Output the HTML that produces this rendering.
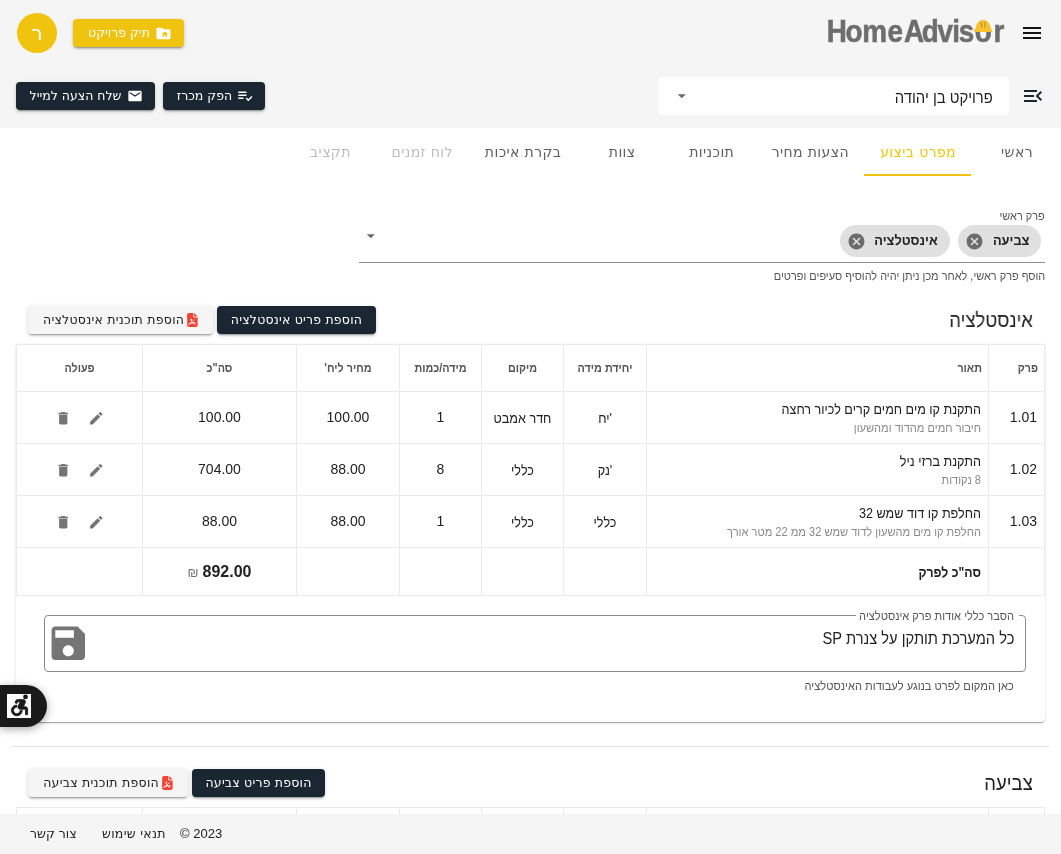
<!DOCTYPE html>
<html lang="he" dir="rtl">
<head>
<meta charset="utf-8">
<title>HomeAdvisor</title>
<style>
*{box-sizing:border-box}
html,body{margin:0;padding:0;overflow:hidden}
body{width:1061px;height:854px;overflow:hidden;background:#fff;position:relative;
 font-family:"Liberation Sans","DejaVu Sans",sans-serif;color:#212121;direction:rtl}
.dv{font-family:"DejaVu Sans","Liberation Sans",sans-serif}
.abs{position:absolute}
svg{display:block}
/* header */
#topbar{position:absolute;left:0;top:0;width:1061px;height:128px;background:#f5f5f5}
.btn{position:absolute;display:flex;align-items:center;justify-content:center;border-radius:4px;
 font-family:"DejaVu Sans","Liberation Sans",sans-serif;font-size:12.5px;letter-spacing:0;white-space:nowrap;
 box-shadow:0 3px 1px -2px rgba(0,0,0,.2),0 2px 2px 0 rgba(0,0,0,.14),0 1px 5px 0 rgba(0,0,0,.12)}
.btn span{position:relative;top:-1px}
.btn.dark{background:#1a2732;color:#fff}
.btn.yel{background:#f0c30f;color:#fff}
.btn.light{background:#f5f5f5;color:#212121}
/* tabs */
#tabs{position:absolute;right:0;top:128px;height:48px;display:flex;flex-direction:row}
.tab{min-width:90px;padding:0 15px 0 17px;height:48px;line-height:48px;text-align:center;font-family:"DejaVu Sans",sans-serif;
 font-size:14px;letter-spacing:.4px;color:#5f5f5f;white-space:nowrap;position:relative}
.tab.sel{color:#f0c30f}
.tab.sel:after{content:"";position:absolute;left:0;right:0;bottom:0;height:2px;background:#f0c30f}
.tab.dis{color:#bdbdbd}
/* table */
table.t{position:absolute;border-collapse:collapse;table-layout:fixed;left:16px;width:1029px}
table.t td,table.t th{border:1px solid #eaeaea;padding:0 8px;text-align:center;font-size:14px;font-weight:normal;color:#212121;vertical-align:middle}
table.t th{font-size:12px;font-weight:bold;color:#555;height:47px}
table.t td.r,table.t th.r{text-align:right}
.sub{font-size:12px;color:#8a8a8a;margin-top:4px}
.hx.sub{transform:scaleX(.923)}
table.t td.n{padding-bottom:2px}
table.t th.r{padding-right:6px}
table.t td.r{padding-right:7px}
table.t td.c1{padding-right:7px;padding-bottom:2px;text-align:right}
.nh{letter-spacing:-.65px}

.hx{display:block;transform:scaleX(.9);transform-origin:right center;white-space:nowrap}
.hc{display:block;transform:scaleX(.9);transform-origin:center center;white-space:nowrap}
.chip{position:absolute;height:32px;border-radius:16px;background:#e0e0e0;top:225px}
.chip b{position:absolute;right:12px;top:0;line-height:32px;font-size:13.5px;color:#212121;white-space:nowrap;transform:scaleX(.95);transform-origin:right center}
.chip svg{position:absolute;left:7px;top:6.500px}
.h6{position:absolute;right:28px;font-size:20.5px;line-height:28px;color:#212121;white-space:nowrap;transform:scaleX(.9);transform-origin:right center}
.cap{position:absolute;font-size:12px;line-height:16px;color:#555;white-space:nowrap;transform:scaleX(.91);transform-origin:right center}
.ic{display:inline-block;vertical-align:middle}
</style>
</head>
<body>
<div id="wrap" style="position:absolute;left:0;top:0;width:1061px;height:854px;overflow:hidden;will-change:transform">
<div id="topbar">
 <!-- hamburger -->
 <svg class="abs" style="left:1020px;top:21px" width="24" height="24" viewBox="0 0 24 24"><path fill="#111" d="M3 18h18v-2H3v2zm0-5h18v-2H3v2zm0-7v2h18V6H3z"/></svg>
 <!-- logo -->
 <svg class="abs" style="left:824px;top:10px" width="190" height="40" viewBox="0 0 190 40" direction="ltr">
  <text transform="scale(0.87,1)" x="3.2 24.8 44.0 73.0 91.9 112.3 130.4 147.3 155.0 173.3 194.9" y="32.4" font-family="Liberation Sans, sans-serif" font-weight="bold" font-size="32" fill="#6e6e6e" stroke="#6e6e6e" stroke-width=".6" style="direction:ltr;unicode-bidi:bidi-override">HomeAdvisor</text>
  <path d="M151.400 20.500C151.400 14.500 154.500 11 157.200 10.600L157.600 9.900h3.200l.4.700c2.700.4 5.800 3.900 5.800 9.900z" fill="#f8c22d"/>
  <rect x="150" y="19.300" width="18.300" height="2.800" rx="1.400" fill="#f8c22d"/>
  <path d="M156.900 11.500l.9 6M161.500 11.500l-.9 6" stroke="#8a7440" stroke-width=".7" fill="none"/>
 </svg>
 <!-- avatar -->
 <div class="abs dv" style="left:17px;top:13px;width:40px;height:40px;border-radius:50%;background:#f0c30f;color:#fff;font-size:20px;line-height:40px;text-align:center">ר</div>
 <div class="btn yel" style="left:73px;top:19px;width:111px;height:28px"><svg width="17" height="17" viewBox="0 0 24 24" style="margin-left:5px;margin-right:-3px"><path fill="#fff" d="M20 6h-8l-2-2H4c-1.100 0-2 .9-2 2v12c0 1.100.9 2 2 2h16c1.100 0 2-.9 2-2V8c0-1.100-.9-2-2-2zm-3 11h-2v-3h-2v3h-2v-4.500H9.500L14 9l4.500 3.500H17V17z"/></svg><span>תיק פרויקט</span></div>
 <!-- second row -->
 <svg class="abs" style="left:1021px;top:84px" width="24" height="24" viewBox="0 0 24 24"><path fill="#1a2732" d="M3 18h13v-2H3v2zm0-5h10v-2H3v2zm0-7v2h13V6H3zm18 9.590L17.420 12 21 8.410 19.590 7l-5 5 5 5L21 15.590z"/></svg>
 <div class="abs" style="left:658px;top:76.500px;width:351px;height:38.500px;background:#fff;border-radius:4px"></div>
 <div class="abs" id="proj" style="right:68px;top:78.500px;height:38px;line-height:38px;font-size:16px;color:#212121;white-space:nowrap;transform:scaleX(.926);transform-origin:right center">פרויקט בן יהודה</div>
 <svg class="abs" style="left:672.250px;top:85.800px" width="19.500" height="19.500" viewBox="0 0 24 24"><path fill="#6a6a6a" d="M7 10l5 5 5-5z"/></svg>
 <div class="btn dark" style="left:163px;top:82px;width:102px;height:28px"><svg width="18" height="18" viewBox="0 0 24 24" style="margin-left:4px;margin-right:-3px"><path fill="#fff" d="M3 10h11v2H3zm0-4h11v2H3zm0 8h7v2H3zm17.590-2.070l-4.250 4.240-2.120-2.120-1.410 1.410L16.340 19 22 13.340z"/></svg><span>הפק מכרז</span></div>
 <div class="btn dark" style="left:16px;top:82px;width:139px;height:28px"><svg width="16" height="16" viewBox="0 0 24 24" style="margin-left:6px;margin-right:-2px"><path fill="#fff" d="M20 4H4c-1.100 0-1.990.9-1.990 2L2 18c0 1.100.9 2 2 2h16c1.100 0 2-.9 2-2V6c0-1.100-.9-2-2-2zm0 4l-8 5-8-5V6l8 5 8-5v2z"/></svg><span>שלח הצעה למייל</span></div>
</div>
<div id="tabs">
 <div class="tab">ראשי</div>
 <div class="tab sel" style="width:107px">מפרט ביצוע</div>
 <div class="tab" style="width:108.500px">הצעות מחיר</div>
 <div class="tab" style="min-width:89.500px">תוכניות</div>
 <div class="tab" style="min-width:89.700px">צוות</div>
 <div class="tab">בקרת איכות</div>
 <div class="tab dis">לוח זמנים</div>
 <div class="tab dis">תקציב</div>
</div>

<!-- autocomplete -->
<div class="cap" style="right:16px;top:208px">פרק ראשי</div>
<div class="chip" style="left:958px;width:83px"><b>צביעה</b><svg width="19" height="19" viewBox="0 0 24 24"><path fill="#6b6b6b" d="M12 2C6.470 2 2 6.470 2 12s4.470 10 10 10 10-4.470 10-10S17.530 2 12 2zm5 13.590L15.590 17 12 13.410 8.410 17 7 15.590 10.590 12 7 8.410 8.410 7 12 10.590 15.590 7 17 8.410 13.410 12 17 15.590z"/></svg></div>
<div class="chip" style="left:840px;width:110px"><b>אינסטלציה</b><svg width="19" height="19" viewBox="0 0 24 24"><path fill="#6b6b6b" d="M12 2C6.470 2 2 6.470 2 12s4.470 10 10 10 10-4.470 10-10S17.530 2 12 2zm5 13.590L15.590 17 12 13.410 8.410 17 7 15.590 10.590 12 7 8.410 8.410 7 12 10.590 15.590 7 17 8.410 13.410 12 17 15.590z"/></svg></div>
<svg class="abs" style="left:361.250px;top:226px" width="19.500" height="19.500" viewBox="0 0 24 24"><path fill="#6a6a6a" d="M7 10l5 5 5-5z"/></svg>
<div class="abs" style="left:359px;top:262px;width:686px;height:1px;background:#8c8c8c"></div>
<div class="cap" style="right:16px;top:268px">הוסף פרק ראשי, לאחר מכן ניתן יהיה להוסיף סעיפים ופרטים</div>

<!-- section 1 -->
<div class="abs" id="card1" style="left:16px;top:344px;width:1029px;height:377.500px;background:#fff;border-radius:0 0 4px 4px;box-shadow:0 2px 1px -1px rgba(0,0,0,.2),0 1px 1px 0 rgba(0,0,0,.14),0 1px 3px 0 rgba(0,0,0,.12)"></div>
<div class="h6" style="top:306px">אינסטלציה</div>
<div class="btn dark" style="left:217px;top:306px;width:159px;height:28px;letter-spacing:.2px"><span>הוספת פריט אינסטלציה</span></div>
<div class="btn light" style="left:28px;top:306px;width:185px;height:28px;letter-spacing:.25px;padding-left:2px"><svg width="10.800" height="14" viewBox="0 0 384 512" style="margin:0 2px 0 3px"><path fill="#f44336" d="M0 64C0 28.700 28.700 0 64 0H224V128c0 17.700 14.300 32 32 32H384V448c0 35.300-28.700 64-64 64H64c-35.300 0-64-28.700-64-64V64z"/><path fill="#f44336" d="M384 128H256V0z"/><circle cx="150" cy="235" r="22" fill="none" stroke="#fff" stroke-width="26"/><path fill="none" stroke="#fff" stroke-width="30" stroke-linecap="round" d="M60 420C130 380 200 300 260 250M150 260C160 330 210 390 280 410M70 400C140 360 220 350 300 360"/></svg><span>הוספת תוכנית אינסטלציה</span></div>
<table class="t" style="top:344px">
<colgroup><col style="width:56px"><col style="width:342px"><col style="width:83px"><col style="width:82px"><col style="width:82px"><col style="width:103px"><col style="width:154px"><col style="width:126px"></colgroup>
<tr><th class="r"><span class="hx">פרק</span></th><th class="r"><span class="hx">תאור</span></th><th><span class="hc">יחידת מידה</span></th><th><span class="hc">מיקום</span></th><th><span class="hc">מידה/כמות</span></th><th><span class="hc">מחיר ליח'</span></th><th><span class="hc">סה"כ</span></th><th><span class="hc">פעולה</span></th></tr>
<tr style="height:52px"><td class="c1">1.01</td><td class="r"><div class="hx">התקנת קו מים חמים קרים לכיור רחצה</div><div class="hx sub">חיבור חמים מהדוד ומהשעון</div></td><td><span class="hc">&#x200E;'יח</span></td><td><span class="hc">חדר אמבט</span></td><td class="n">1</td><td class="n">100.00</td><td class="n">100.00</td><td><svg class="ic" width="16.5" height="16.5" viewBox="0 0 24 24"><path fill="#757575" d="M3 17.250V21h3.750L17.810 9.940l-3.750-3.750L3 17.250zM20.710 7.040c.39-.39.39-1.020 0-1.410l-2.340-2.340c-.39-.39-1.020-.39-1.410 0l-1.830 1.830 3.750 3.750 1.830-1.830z"/></svg><svg class="ic" width="16.5" height="16.5" viewBox="0 0 24 24" style="margin-right:16px"><path fill="#757575" d="M6 19c0 1.100.9 2 2 2h8c1.100 0 2-.9 2-2V7H6v12zM19 4h-3.500l-1-1h-5l-1 1H5v2h14V4z"/></svg></td></tr>
<tr style="height:52px"><td class="c1">1.02</td><td class="r"><div class="hx">התקנת ברזי ניל</div><div class="hx sub">8 נקודות</div></td><td><span class="hc">&#x200E;'נק</span></td><td><span class="hc">כללי</span></td><td class="n">8</td><td class="n">88.00</td><td class="n">704.00</td><td><svg class="ic" width="16.5" height="16.5" viewBox="0 0 24 24"><path fill="#757575" d="M3 17.250V21h3.750L17.810 9.940l-3.750-3.750L3 17.250zM20.710 7.040c.39-.39.39-1.020 0-1.410l-2.340-2.340c-.39-.39-1.020-.39-1.410 0l-1.830 1.830 3.750 3.750 1.830-1.830z"/></svg><svg class="ic" width="16.5" height="16.5" viewBox="0 0 24 24" style="margin-right:16px"><path fill="#757575" d="M6 19c0 1.100.9 2 2 2h8c1.100 0 2-.9 2-2V7H6v12zM19 4h-3.500l-1-1h-5l-1 1H5v2h14V4z"/></svg></td></tr>
<tr style="height:52px"><td class="c1">1.03</td><td class="r"><div class="hx">החלפת קו דוד שמש 32</div><div class="hx sub">החלפת קו מים מהשעון לדוד שמש 32 ממ 22 מטר אורך</div></td><td><span class="hc">כללי</span></td><td><span class="hc">כללי</span></td><td class="n">1</td><td class="n">88.00</td><td class="n">88.00</td><td><svg class="ic" width="16.5" height="16.5" viewBox="0 0 24 24"><path fill="#757575" d="M3 17.250V21h3.750L17.810 9.940l-3.750-3.750L3 17.250zM20.710 7.040c.39-.39.39-1.020 0-1.410l-2.340-2.340c-.39-.39-1.020-.39-1.410 0l-1.830 1.830 3.750 3.750 1.830-1.830z"/></svg><svg class="ic" width="16.5" height="16.5" viewBox="0 0 24 24" style="margin-right:16px"><path fill="#757575" d="M6 19c0 1.100.9 2 2 2h8c1.100 0 2-.9 2-2V7H6v12zM19 4h-3.500l-1-1h-5l-1 1H5v2h14V4z"/></svg></td></tr>
<tr style="height:48px"><td></td><td class="r"><b class="hx" style="transform:scaleX(.875)">סה"כ לפרק</b></td><td></td><td></td><td></td><td></td><td><b style="font-size:16px">892.00</b> <span style="font-size:13px;color:#757575">₪</span></td><td></td></tr>
</table>
<!-- textarea -->
<div class="abs" style="left:44px;top:615px;width:982px;height:57px;border:1px solid #8c8c8c;border-radius:4px"></div>
<div class="abs" style="left:856px;top:610px;width:163px;height:8px;background:#fff"></div>
<div class="cap" id="talabel" style="right:47px;top:608px;transform:scaleX(.922)">הסבר כללי אודות פרק אינסטלציה</div>
<div class="abs" id="tatext" style="right:47px;top:627px;font-size:16px;line-height:24px;white-space:nowrap;color:#212121;transform:scaleX(.917);transform-origin:right center">כל המערכת תותקן על צנרת SP</div>
<svg class="abs" style="left:46px;top:620.700px" width="44.600" height="44.600" viewBox="0 0 24 24"><path fill="#757575" d="M17 3H5c-1.110 0-2 .9-2 2v14c0 1.100.89 2 2 2h14c1.100 0 2-.9 2-2V7l-4-4zm-5 16c-1.660 0-3-1.340-3-3s1.340-3 3-3 3 1.340 3 3-1.340 3-3 3zm3-10H5V5h10v4z"/></svg>
<div class="cap" id="tahelp" style="right:47px;top:678px;transform:scaleX(.927)">כאן המקום לפרט בנוגע לעבודות האינסטלציה</div>

<div class="abs" style="left:11px;top:746px;width:1038px;height:1px;background:#e0e0e0"></div>

<!-- section 2 -->
<div class="h6" style="top:769px">צביעה</div>
<div class="btn dark" style="left:192px;top:769px;width:133px;height:28px;letter-spacing:.2px"><span>הוספת פריט צביעה</span></div>
<div class="btn light" style="left:28px;top:769px;width:160px;height:28px;letter-spacing:.25px;padding-left:2px"><svg width="10.800" height="14" viewBox="0 0 384 512" style="margin:0 2px 0 3px"><path fill="#f44336" d="M0 64C0 28.700 28.700 0 64 0H224V128c0 17.700 14.300 32 32 32H384V448c0 35.300-28.700 64-64 64H64c-35.300 0-64-28.700-64-64V64z"/><path fill="#f44336" d="M384 128H256V0z"/><circle cx="150" cy="235" r="22" fill="none" stroke="#fff" stroke-width="26"/><path fill="none" stroke="#fff" stroke-width="30" stroke-linecap="round" d="M60 420C130 380 200 300 260 250M150 260C160 330 210 390 280 410M70 400C140 360 220 350 300 360"/></svg><span>הוספת תוכנית צביעה</span></div>
<table class="t" style="top:807px">
<colgroup><col style="width:56px"><col style="width:342px"><col style="width:83px"><col style="width:82px"><col style="width:82px"><col style="width:103px"><col style="width:154px"><col style="width:126px"></colgroup>
<tr><th class="r"><span class="hx">פרק</span></th><th class="r"><span class="hx">תאור</span></th><th><span class="hc">יחידת מידה</span></th><th><span class="hc">מיקום</span></th><th><span class="hc">מידה/כמות</span></th><th><span class="hc">מחיר ליח'</span></th><th><span class="hc">סה"כ</span></th><th><span class="hc">פעולה</span></th></tr>
</table>

<!-- accessibility -->
<div class="abs" style="left:0;top:685px;width:47px;height:42px;background:#1a1a1a;border-radius:0 21px 21px 0;box-shadow:0 2px 8px rgba(0,0,0,.35)"></div>
<div class="abs" style="left:7px;top:693.500px;width:24px;height:24.500px;background:#fff"></div>
<svg class="abs" style="left:5.500px;top:692.250px" width="26" height="26" viewBox="0 0 24 24"><circle cx="18" cy="4.540" r="2.200" fill="#1a1a1a"/><path fill="#1a1a1a" stroke="#1a1a1a" stroke-width=".7" d="M15 17h-2c0 1.650-1.350 3-3 3s-3-1.350-3-3 1.350-3 3-3v-2c-2.760 0-5 2.240-5 5s2.240 5 5 5 5-2.240 5-5zm3-3.500h-1.860l1.670-3.670C18.420 8.500 17.440 7 15.960 7h-5.200c-.81 0-1.540.47-1.870 1.200L8.220 10l1.920.53.650-1.530H13l-1.830 4.100c-.6 1.330.39 2.900 1.850 2.900H18v5h2v-5.500c0-1.100-.9-2-2-2z"/></svg>

<!-- footer -->
<div class="abs" style="left:0;top:814px;width:1061px;height:40px;background:#f5f5f5"></div>
<div class="abs" style="left:180px;top:814px;line-height:40px;font-size:13px;color:#212121;direction:ltr;white-space:nowrap">© 2023</div>
<div class="abs dv" style="left:102px;top:814px;line-height:39px;font-size:12.500px;color:#212121;white-space:nowrap;letter-spacing:.3px">תנאי שימוש</div>
<div class="abs dv" style="left:30px;top:814px;line-height:39px;font-size:12.500px;color:#212121;white-space:nowrap;letter-spacing:0">צור קשר</div>
</div>
</body>
</html>
